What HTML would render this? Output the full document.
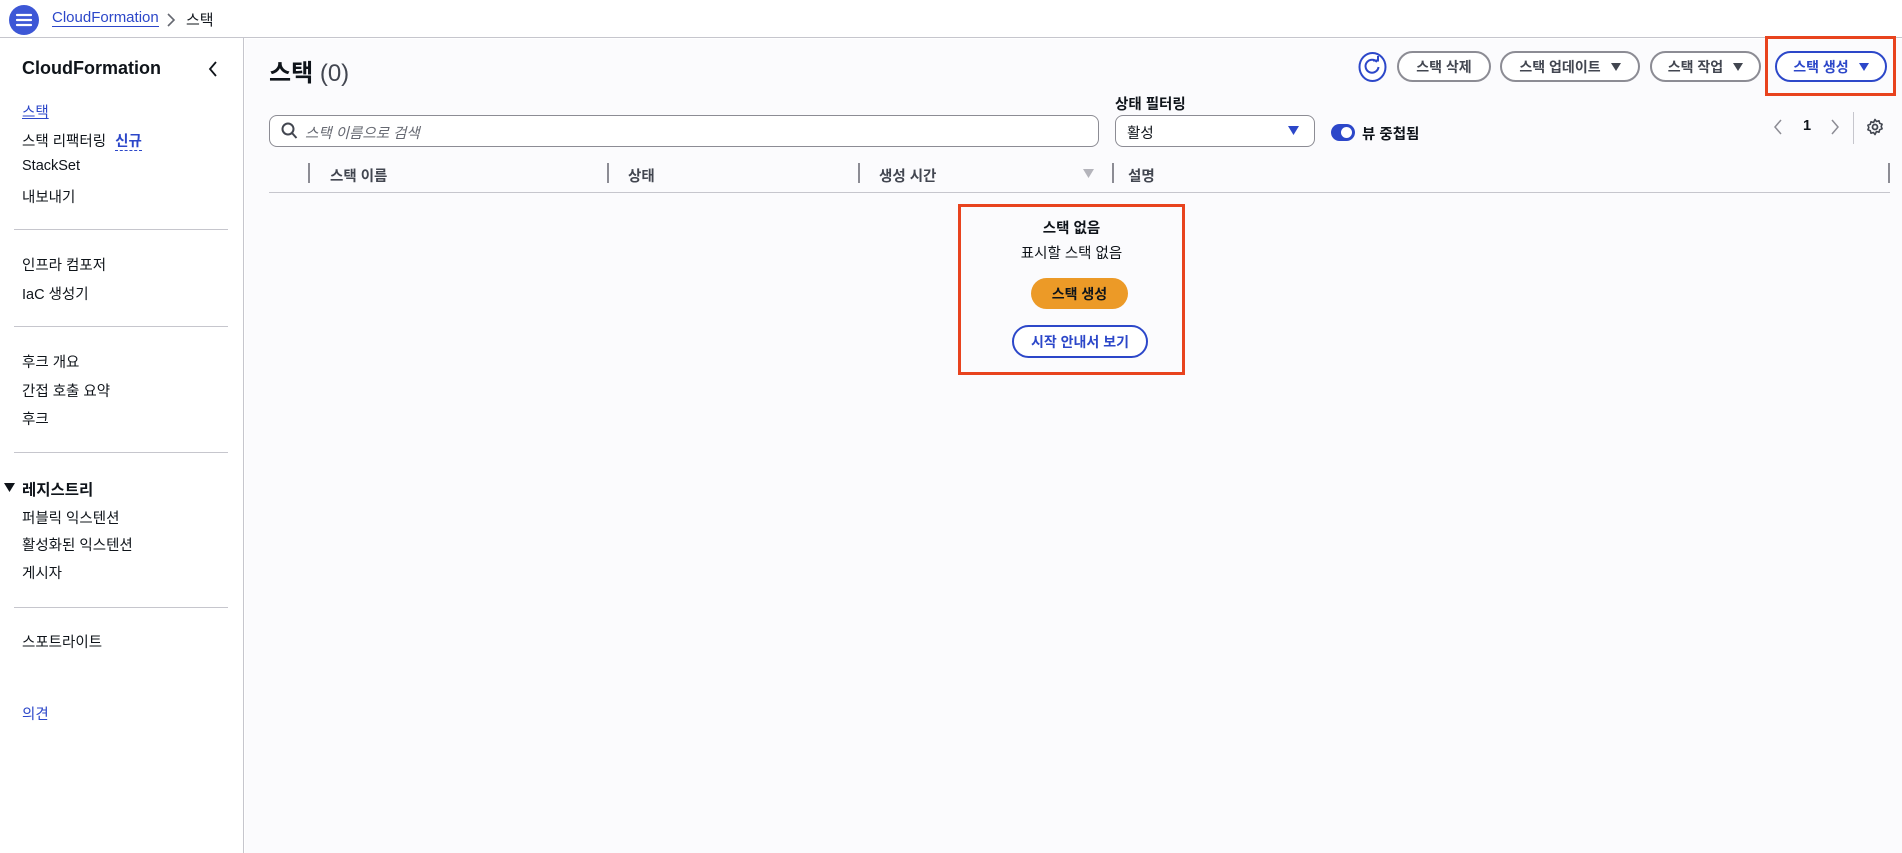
<!DOCTYPE html>
<html><head><meta charset="utf-8"><style>
*{box-sizing:border-box;margin:0;padding:0}
body{width:1902px;height:853px;overflow:hidden;font-family:"Liberation Sans","Noto Sans CJK KR",sans-serif;color:#0f141a;background:#fff;position:relative;font-size:15px}
.a{position:absolute;white-space:nowrap}
.hdr{position:absolute;left:0;top:0;width:1902px;height:38px;border-bottom:1px solid #c6c6cd;background:#fff}
.side{position:absolute;left:0;top:38px;width:244px;height:815px;border-right:1px solid #c6c6cd;background:#fff}
.main{position:absolute;left:245px;top:39px;right:0;bottom:0;background:#fbfbfd}
.nav{position:absolute;left:22px;font-size:14.5px;color:#0f141a}
.sep{position:absolute;left:14px;width:214px;height:1px;background:#c6c6cd}
.btn{position:absolute;top:51px;height:31px;border:2px solid #8c8c94;border-radius:16px;font-size:14px;font-weight:bold;color:#424650;display:flex;align-items:center;justify-content:center;background:#fff}
.tri{display:inline-block;width:0;height:0;border-left:5px solid transparent;border-right:5px solid transparent;border-top:8px solid currentColor;margin-left:10px}
.col{position:absolute;top:163px;width:2px;height:20px;background:#8c8c94}
.th{position:absolute;top:165px;font-size:14.5px;font-weight:bold;color:#424650}
.red{position:absolute;border:3px solid #e8431e}
</style></head><body>
<div class="hdr">
<svg class="a" style="left:9px;top:5px" width="30" height="30"><circle cx="15" cy="15" r="15" fill="#3d57d6"/><path d="M8 10h14M8 15h14M8 20h14" stroke="#fff" stroke-width="2.2" stroke-linecap="round"/></svg>
<div class="a" style="left:52px;top:9px;font-size:15px;color:#2c47c9;border-bottom:1px solid #2c47c9;line-height:17px">CloudFormation</div>
<svg class="a" style="left:166px;top:13px" width="10" height="14"><path d="M2 1l6 6-6 6" fill="none" stroke="#656871" stroke-width="1.6"/></svg>
<div class="a" style="left:186px;top:9px;font-size:15px;color:#0f141a">스택</div>
</div>
<div class="side">
<div class="a" style="left:22px;top:20px;font-size:18px;font-weight:bold">CloudFormation</div>
<svg class="a" style="left:208px;top:23px" width="10" height="16"><path d="M8 1L2 8l6 7" fill="none" stroke="#0f141a" stroke-width="1.8"/></svg>
<div class="nav" style="top:63px;color:#2c47c9;text-decoration:underline">스택</div>
<div class="nav" style="top:92px">스택 리팩터링 <span style="color:#2c47c9;font-weight:bold;border-bottom:1px dashed #2c47c9;margin-left:5px">신규</span></div>
<div class="nav" style="top:120px">StackSet</div>
<div class="nav" style="top:148px">내보내기</div>
<div class="sep" style="top:191px"></div>
<div class="nav" style="top:216px">인프라 컴포저</div>
<div class="nav" style="top:245px">IaC 생성기</div>
<div class="sep" style="top:288px"></div>
<div class="nav" style="top:313px">후크 개요</div>
<div class="nav" style="top:342px">간접 호출 요약</div>
<div class="nav" style="top:370px">후크</div>
<div class="sep" style="top:414px"></div>
<svg class="a" style="left:4px;top:445px" width="11" height="9"><path d="M0 0h11L5.5 9z" fill="#0f141a"/></svg>
<div class="nav" style="top:440px;font-weight:bold;font-size:15.5px">레지스트리</div>
<div class="nav" style="top:469px;left:22px">퍼블릭 익스텐션</div>
<div class="nav" style="top:496px">활성화된 익스텐션</div>
<div class="nav" style="top:524px">게시자</div>
<div class="sep" style="top:569px"></div>
<div class="nav" style="top:593px">스포트라이트</div>
<div class="nav" style="top:665px;color:#2c47c9">의견</div>
</div>
<div class="main"></div>
<div class="a" style="left:269px;top:53px;font-size:24px;font-weight:bold">스택 <span style="font-weight:normal;color:#424650">(0)</span></div>
<svg class="a" style="left:1358px;top:52px" width="29" height="30"><ellipse cx="14.5" cy="15" rx="13" ry="14" fill="#fff" stroke="#2c47c9" stroke-width="2"/><path d="M19 10a6.5 6.5 0 1 0 1.5 5" fill="none" stroke="#2c47c9" stroke-width="2"/><path d="M15 8.5h5v-4.5" fill="none" stroke="#2c47c9" stroke-width="2"/></svg>
<div class="btn" style="left:1397px;width:94px">스택 삭제</div>
<div class="btn" style="left:1500px;width:140px">스택 업데이트<span class="tri"></span></div>
<div class="btn" style="left:1650px;width:111px">스택 작업<span class="tri"></span></div>
<div class="btn" style="left:1775px;width:112px;border-color:#2c47c9;color:#2c47c9">스택 생성<span class="tri"></span></div>
<div class="red" style="left:1765px;top:36px;width:131px;height:60px"></div>
<div class="a" style="left:1115px;top:93px;font-size:14.5px;font-weight:bold">상태 필터링</div>
<div class="a" style="left:269px;top:115px;width:830px;height:32px;border:1px solid #8c8c94;border-radius:8px;background:#fff"></div>
<svg class="a" style="left:281px;top:122px" width="17" height="18"><circle cx="7" cy="7" r="5.5" fill="none" stroke="#424650" stroke-width="2"/><path d="M11 11l4.5 5" stroke="#424650" stroke-width="2"/></svg>
<div class="a" style="left:305px;top:122px;font-size:14.5px;font-style:italic;color:#656871">스택 이름으로 검색</div>
<div class="a" style="left:1115px;top:115px;width:200px;height:32px;border:1px solid #8c8c94;border-radius:8px;background:#fff"></div>
<div class="a" style="left:1127px;top:122px;font-size:14.5px">활성</div>
<svg class="a" style="left:1288px;top:126px" width="11" height="9"><path d="M0 0h11L5.5 9z" fill="#2c47c9"/></svg>
<svg class="a" style="left:1331px;top:124px" width="24" height="17"><rect width="24" height="17" rx="8.5" fill="#2c47c9"/><circle cx="15.5" cy="8.5" r="5.5" fill="#fff"/></svg>
<div class="a" style="left:1362px;top:123px;font-size:14.5px;font-weight:bold">뷰 중첩됨</div>
<svg class="a" style="left:1773px;top:119px" width="10" height="16"><path d="M8 1L2 8l6 7" fill="none" stroke="#8c8c94" stroke-width="1.5"/></svg>
<div class="a" style="left:1803px;top:118px;font-size:14.5px;font-weight:bold">1</div>
<svg class="a" style="left:1830px;top:119px" width="10" height="16"><path d="M2 1l6 7-6 7" fill="none" stroke="#8c8c94" stroke-width="1.5"/></svg>
<div class="a" style="left:1853px;top:112px;width:1px;height:32px;background:#c6c6cd"></div>
<svg class="a" style="left:1866px;top:118px" width="18" height="18" viewBox="0 0 18 18"><circle cx="9" cy="9" r="2.5" fill="none" stroke="#424650" stroke-width="1.8"/><path d="M9 1.5l1.5 2 2.5-.7.7 2.5 2.4.9-.9 2.3.9 2.3-2.4.9-.7 2.5-2.5-.7L9 16.5l-1.5-2-2.5.7-.7-2.5-2.4-.9.9-2.3-.9-2.3 2.4-.9.7-2.5 2.5.7z" fill="none" stroke="#424650" stroke-width="1.6" stroke-linejoin="round"/></svg>
<div class="col" style="left:308px"></div>
<div class="col" style="left:607px"></div>
<div class="col" style="left:858px"></div>
<div class="col" style="left:1112px"></div>
<div class="col" style="left:1888px"></div>
<div class="th" style="left:330px">스택 이름</div>
<div class="th" style="left:628px">상태</div>
<div class="th" style="left:879px">생성 시간</div>
<svg class="a" style="left:1083px;top:169px" width="11" height="9"><path d="M0 0h11L5.5 9z" fill="#b4b4bb"/></svg>
<div class="th" style="left:1128px">설명</div>
<div class="a" style="left:269px;top:192px;width:1621px;height:1px;background:#c6c6cd"></div>
<div class="a" style="left:958px;top:217px;width:227px;text-align:center;font-size:14.5px;font-weight:bold">스택 없음</div>
<div class="a" style="left:958px;top:242px;width:227px;text-align:center;font-size:14.5px;color:#0f141a">표시할 스택 없음</div>
<div class="a" style="left:1031px;top:278px;width:97px;height:31px;border-radius:16px;background:#ec9a27;font-size:14px;font-weight:bold;display:flex;align-items:center;justify-content:center">스택 생성</div>
<div class="a" style="left:1012px;top:325px;width:136px;height:33px;border:2px solid #2c47c9;border-radius:17px;background:#fff;color:#2c47c9;font-size:14px;font-weight:bold;display:flex;align-items:center;justify-content:center">시작 안내서 보기</div>
<div class="red" style="left:958px;top:204px;width:227px;height:171px"></div>
</body></html>
